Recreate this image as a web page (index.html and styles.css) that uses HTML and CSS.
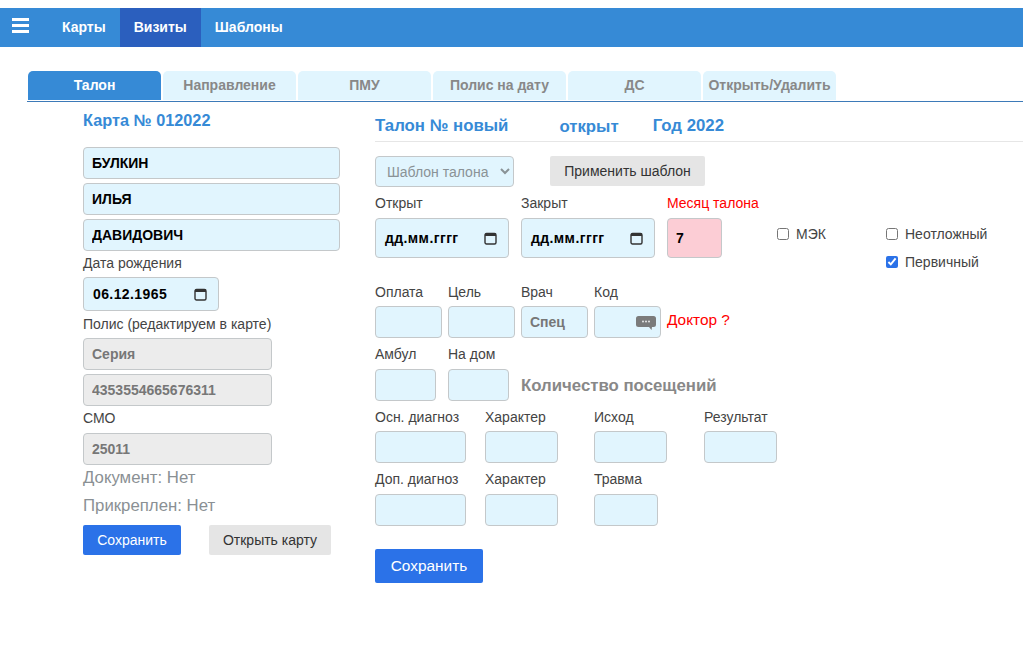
FILE: index.html
```html
<!DOCTYPE html>
<html lang="ru">
<head>
  <meta charset="UTF-8">
  <title>Визиты</title>
  <link rel="stylesheet" href="styles.css">
</head>
<body>

  <nav class="navbar">
    <div class="burger"><span></span><span></span><span></span></div>
    <a class="nav-link">Карты</a>
    <a class="nav-link active">Визиты</a>
    <a class="nav-link">Шаблоны</a>
  </nav>

  <div class="tabs">
    <div class="tab active">Талон</div>
    <div class="tab">Направление</div>
    <div class="tab">ПМУ</div>
    <div class="tab">Полис на дату</div>
    <div class="tab">ДС</div>
    <div class="tab">Открыть/Удалить</div>
  </div>

  <div class="content">
    <section class="card-col">
      <h3 class="card-title">Карта № 012022</h3>
      <input class="inp name" type="text" value="БУЛКИН">
      <input class="inp name" type="text" value="ИЛЬЯ">
      <input class="inp name" type="text" value="ДАВИДОВИЧ">
      <label class="lbl birth-lbl">Дата рождения</label>
      <div class="inp date birth">
        <span>06.12.1965</span>
        <svg class="cal" viewBox="0 0 13 13"><rect x="1" y="1.500" width="11" height="10.500" rx="1.500" fill="none" stroke="#333" stroke-width="1.400"/><path d="M1 1.500h11v2.500H1z" fill="#333"/></svg>
      </div>
      <label class="lbl polis-lbl">Полис (редактируем в карте)</label>
      <input class="inp grey" type="text" value="Серия" readonly>
      <input class="inp grey" type="text" value="4353554665676311" readonly>
      <label class="lbl smo-lbl">СМО</label>
      <input class="inp grey" type="text" value="25011" readonly>
      <div class="note doc">Документ: Нет</div>
      <div class="note att">Прикреплен: Нет</div>
      <div class="card-btns">
        <button class="btn primary">Сохранить</button>
        <button class="btn light">Открыть карту</button>
      </div>
    </section>

    <section class="visit-col">
      <div class="visit-head">
        <span class="head-num">Талон № новый</span>
        <span class="head-state">открыт</span>
        <span class="head-year">Год 2022</span>
      </div>

      <div class="template-row">
        <select class="tpl-select"><option>Шаблон талона</option></select>
        <button class="btn light apply">Применить шаблон</button>
      </div>

      <div class="row dates-row">
        <div class="field">
          <label class="lbl">Открыт</label>
          <div class="inp date tall">
            <span>дд.мм.гггг</span>
            <svg class="cal" viewBox="0 0 13 13"><rect x="1" y="1.500" width="11" height="10.500" rx="1.500" fill="none" stroke="#333" stroke-width="1.400"/><path d="M1 1.500h11v2.500H1z" fill="#333"/></svg>
          </div>
        </div>
        <div class="field">
          <label class="lbl">Закрыт</label>
          <div class="inp date tall">
            <span>дд.мм.гггг</span>
            <svg class="cal" viewBox="0 0 13 13"><rect x="1" y="1.500" width="11" height="10.500" rx="1.500" fill="none" stroke="#333" stroke-width="1.400"/><path d="M1 1.500h11v2.500H1z" fill="#333"/></svg>
          </div>
        </div>
        <div class="field month-field">
          <label class="lbl red">Месяц талона</label>
          <input class="inp month" type="text" value="7">
        </div>
        <div class="check-mek">
          <label class="chk"><input type="checkbox">МЭК</label>
        </div>
        <div class="check-col">
          <label class="chk"><input type="checkbox">Неотложный</label>
          <label class="chk"><input type="checkbox" checked>Первичный</label>
        </div>
      </div>

      <div class="row pay-row">
        <div class="field"><label class="lbl">Оплата</label><input class="inp w67" type="text"></div>
        <div class="field"><label class="lbl">Цель</label><input class="inp w67" type="text"></div>
        <div class="field"><label class="lbl">Врач</label><input class="inp w67 spec" type="text" value="Спец"></div>
        <div class="field">
          <label class="lbl">Код</label>
          <input class="inp w67" type="text">
          <svg class="chat" viewBox="0 0 20 14"><path d="M2.500 0h15A2.500 2.500 0 0 1 20 2.500v6a2.500 2.500 0 0 1-2.500 2.500H16l-.5 3-2.500-3H2.500A2.500 2.500 0 0 1 0 8.500v-6A2.500 2.500 0 0 1 2.500 0z" fill="#7b7b7b"/><circle cx="7" cy="5.500" r="1" fill="#e6e6e6"/><circle cx="10" cy="5.500" r="1" fill="#e6e6e6"/><circle cx="13" cy="5.500" r="1" fill="#e6e6e6"/></svg>
        </div>
        <span class="doctor">Доктор ?</span>
      </div>

      <div class="row amb-row">
        <div class="field"><label class="lbl">Амбул</label><input class="inp w61" type="text"></div>
        <div class="field home-field"><label class="lbl">На дом</label><input class="inp w61" type="text"></div>
        <span class="visits">Количество посещений</span>
      </div>

      <div class="diag-row main-diag">
        <div class="field"><label class="lbl">Осн. диагноз</label><input class="inp w91" type="text"></div>
        <div class="field"><label class="lbl">Характер</label><input class="inp w73" type="text"></div>
        <div class="field"><label class="lbl">Исход</label><input class="inp w73" type="text"></div>
        <div class="field"><label class="lbl">Результат</label><input class="inp w73" type="text"></div>
      </div>

      <div class="diag-row extra-diag">
        <div class="field"><label class="lbl">Доп. диагноз</label><input class="inp w91" type="text"></div>
        <div class="field"><label class="lbl">Характер</label><input class="inp w73" type="text"></div>
        <div class="field"><label class="lbl">Травма</label><input class="inp w64" type="text"></div>
      </div>

      <button class="btn primary save-big">Сохранить</button>
    </section>
  </div>

</body>
</html>
```

FILE: styles.css
```css
* {
  box-sizing: border-box;
}

body {
  margin: 0;
  padding-top: 8px;
  font-family: 'Liberation Sans', Arial, sans-serif;
  font-size: 14px;
  color: #444;
  background-color: #fff;
}

/* верхнее меню */
.navbar {
  display: flex;
  height: 39px;
  background-color: #368ad6;
}

.burger {
  width: 48px;
  padding: 10px 0 0 12px;
}

.burger span {
  display: block;
  width: 17px;
  height: 3px;
  margin-bottom: 3px;
  background-color: #fff;
}

.nav-link {
  padding: 0 14px 0 14px;
  line-height: 39px;
  font-weight: bold;
  color: #fff;
}

.nav-link.active {
  background-color: #2b5fbe;
}

/* вкладки */
.tabs {
  display: flex;
  gap: 2px;
  height: 31px;
  margin: 24px 0 0 27px;
  padding-left: 1px;
  border-bottom: 1px solid #3d7ab8;
}

.tab {
  width: 133px;
  height: 29px;
  border-radius: 5px 5px 0 0;
  background-color: #e1f5fe;
  color: #888;
  font-weight: bold;
  line-height: 29px;
  text-align: center;
}

.tab.active {
  background-color: #368ad6;
  color: #fff;
}

.content {
  display: flex;
}

.card-col {
  display: flex;
  flex-direction: column;
  align-items: flex-start;
  width: 292px;
  margin-left: 83px;
}

.card-title {
  margin: 9px 0 18px;
  font-size: 16.300px;
  line-height: 18px;
  color: #368ad6;
}

.inp {
  height: 32px;
  padding: 0 8px;
  border: 1px solid #c4c8ca;
  border-radius: 4px;
  background-color: #e1f5fe;
  font-family: inherit;
  font-size: 14px;
  font-weight: bold;
  color: #000;
  outline: none;
}

.name {
  width: 257px;
  margin-bottom: 4px;
}

.grey {
  width: 189px;
  margin-bottom: 4px;
  background-color: #ececec;
  color: #777;
}

.lbl {
  display: block;
  height: 16px;
  line-height: 16px;
  font-size: 14px;
  color: #444;
  white-space: nowrap;
}

.lbl.red {
  color: #f00;
}

.birth-lbl {
  margin-bottom: 6px;
}

.polis-lbl {
  margin-top: 5px;
  margin-bottom: 6px;
}

.smo-lbl {
  margin-bottom: 7px;
}

.date {
  display: flex;
  align-items: center;
  justify-content: space-between;
  padding: 0 11px 0 9px;
  letter-spacing: 0.400px;
}

.birth {
  width: 136px;
  height: 34px;
}

.tall {
  width: 134px;
  height: 40px;
}

.cal {
  width: 13px;
  height: 13px;
}

.note {
  font-size: 16.800px;
  line-height: 18px;
  color: #8a9094;
}

.att {
  margin-top: 10px;
}

.card-btns {
  display: flex;
  gap: 28px;
  margin-top: 10px;
}

.btn {
  height: 30px;
  border: none;
  border-radius: 2px;
  font-family: inherit;
  font-size: 14px;
  cursor: pointer;
}

.btn.primary {
  width: 98px;
  background-color: #2b72e8;
  color: #fff;
}

.btn.light {
  width: 122px;
  background-color: #e5e5e5;
  color: #333;
}

.visit-col {
  flex: 1;
}

.visit-head {
  display: flex;
  height: 40px;
  padding-top: 14px;
  border-bottom: 1px solid #e6e6e6;
  font-size: 16.800px;
  line-height: 19px;
  font-weight: bold;
  color: #368ad6;
}

.head-state {
  margin-left: 51px;
  padding-top: 1px;
}

.head-year {
  margin-left: 34px;
}

.template-row {
  display: flex;
  gap: 36px;
  margin-top: 14px;
}

.tpl-select {
  width: 139px;
  height: 31px;
  padding-left: 7px;
  border: 1px solid #c4c8ca;
  border-radius: 4px;
  background-color: #e1f5fe;
  font-family: inherit;
  font-size: 14px;
  color: #8a9296;
}

.btn.apply {
  width: 155px;
}

.row {
  display: flex;
  gap: 6px;
}

.field {
  position: relative;
}

.field .lbl {
  margin-bottom: 6px;
}

.dates-row {
  gap: 12px;
  margin-top: 8px;
}

.dates-row .lbl {
  margin-bottom: 7px;
}

.month-field {
  width: 55px;
}

.month {
  width: 55px;
  height: 40px;
  background-color: #fccdd5;
}

.check-mek {
  width: 97px;
  margin-left: 43px;
  padding-top: 31px;
}

.check-col {
  display: flex;
  flex-direction: column;
  gap: 12px;
  padding-top: 31px;
}

.chk {
  display: flex;
  align-items: center;
  height: 16px;
  color: #444;
  white-space: nowrap;
}

.chk input {
  width: 12px;
  height: 12px;
  margin: 0 7px 0 0;
  accent-color: #2b72e8;
}

.pay-row {
  margin-top: 14px;
}

.w67 {
  width: 67px;
}

.w61 {
  width: 61px;
}

.w91 {
  width: 91px;
}

.w73 {
  width: 73px;
}

.w64 {
  width: 64px;
}

.spec {
  color: #777;
}

/* иконка поверх поля Код */
.chat {
  position: absolute;
  right: 5px;
  bottom: 8px;
  width: 20px;
  height: 14px;
}

.doctor {
  margin-top: 28px;
  color: #f00;
  font-size: 15.400px;
  line-height: 16px;
}

.amb-row {
  margin-top: 8px;
}

.amb-row .lbl {
  margin-bottom: 7px;
}

.home-field {
  margin-left: 6px;
}

.visits {
  margin: 31px 0 0 6px;
  font-size: 16.800px;
  line-height: 18px;
  font-weight: bold;
  color: #888;
}

.diag-row {
  display: grid;
  grid-template-columns: 110px 109px 110px 80px;
  margin-top: 8px;
}

.extra-diag .lbl {
  margin-bottom: 7px;
}

.btn.save-big {
  display: block;
  width: 108px;
  height: 34px;
  margin-top: 23px;
  font-size: 15.400px;
}
```
